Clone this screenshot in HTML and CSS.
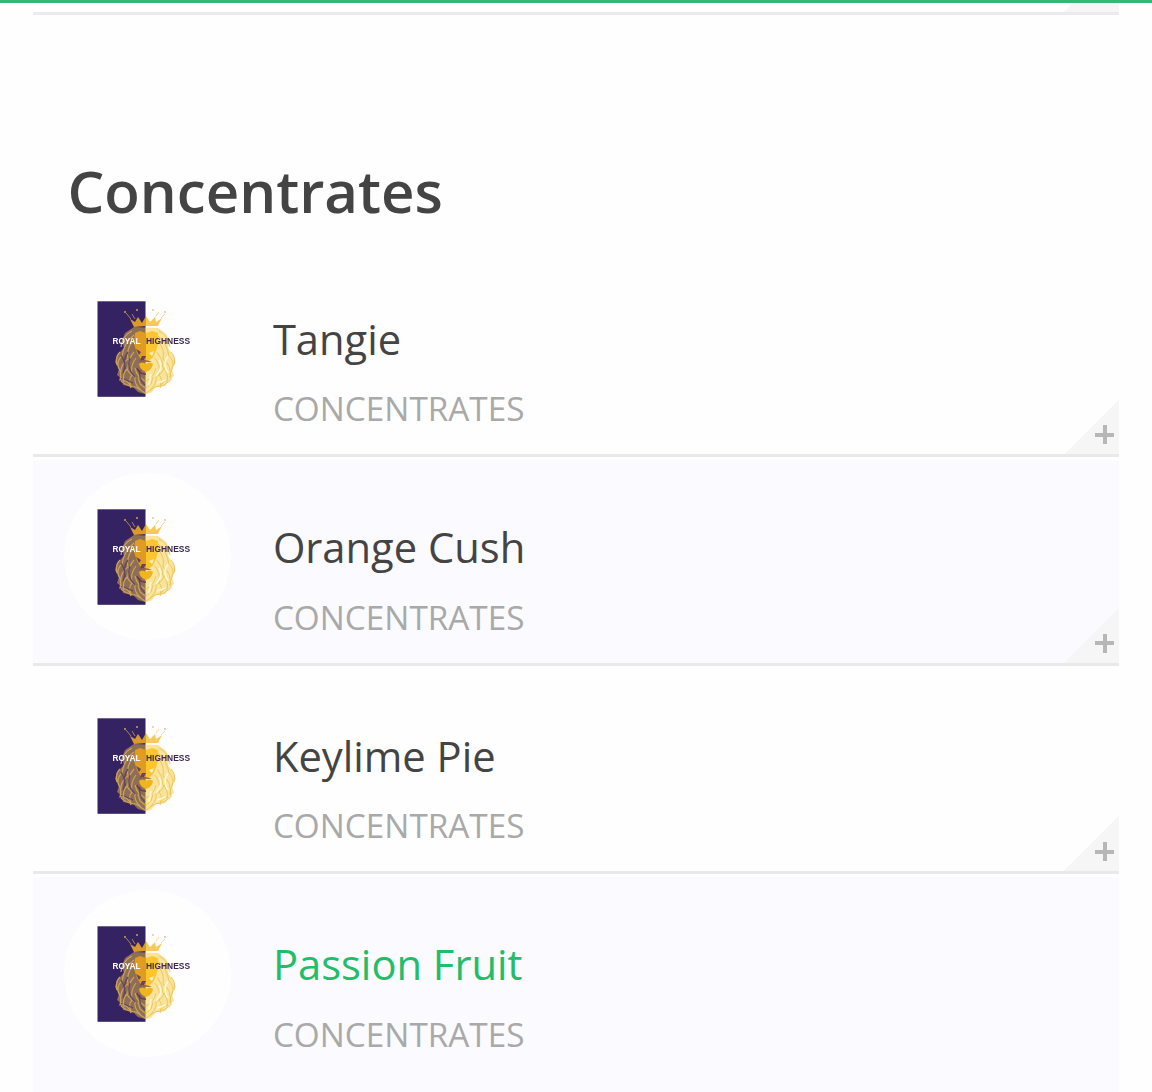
FILE: index.html
```html
<!DOCTYPE html>
<html lang="en">
<head>
    <meta charset="UTF-8">
    <meta name="viewport" content="width=device-width, initial-scale=1.0">
    <title>Concentrates</title>
    <link rel="stylesheet" href="styles.css">
</head>
<body>
    <div class="top-bar"></div>

    <main class="menu">
        <div class="previous-item">
            <div class="corner"></div>
        </div>

        <h2 class="menu-title">Concentrates</h2>

        <ul class="menu-list">
            <li class="menu-item">
                <div class="thumb">
                    <!-- Brand logo, reused by the other rows -->
                    <svg viewBox="0 0 168 168">
                        <defs>
                            <filter id="soft"><feGaussianBlur stdDeviation="0.7"/></filter>
                            <clipPath id="left-half"><rect x="33" y="36" width="48.5" height="96"/></clipPath>
                            <clipPath id="right-half"><rect x="81.5" y="36" width="50" height="96"/></clipPath>
                            <path id="mane" d="M68 66Q58 71 57 82M70 70Q60 78 58 91Q52 96 55 104M69 76Q62 84 64 94Q55 100 57 113M70 87Q64 94 64 103Q58 108 60 117M72 93Q66 101 68 110Q64 114 67 121M56 87Q51 92 53 100M54 101Q58 108 56 115Q64 114 67 123M61 101Q65 109 71 112Q70 119 77 125M71 103Q73 112 81 116M57 116Q64 122 72 122L81 128M74 112L76 119L81 123M95 66Q105 71 106 82M93 70Q103 78 105 91Q111 96 108 104M94 76Q101 84 99 94Q108 100 106 113M93 87Q99 94 99 103Q105 108 103 117M91 93Q97 101 95 110Q99 114 96 121M107 87Q112 92 110 100M109 101Q105 108 107 115Q99 114 96 123M102 101Q98 109 92 112Q93 119 86 125M92 103Q90 112 82 116M106 116Q99 122 91 122L82 128M89 112L87 119L82 123"/>
                            <path id="mane-shape" d="M70 62L61 68L58 76L60 83L53 90L51 97L55 104L53 110L58 114L59 120L69 122L74 127L81 129L87 128L92 122L102 121L104 115L110 111L108 104L112 97L109 90L104 83L106 75L101 68L94 63Z"/>
                        </defs>
                        <g id="logo">
                            <g filter="url(#soft)">
                                <rect x="33.5" y="36.3" width="48" height="95.5" fill="#362363"/>
                                <use href="#mane-shape" fill="#9d7b54" opacity=".85" clip-path="url(#left-half)"/>
                                <use href="#mane-shape" fill="#f9dd85" opacity=".8" clip-path="url(#right-half)"/>
                                <use href="#mane" fill="none" stroke="#cba25a" stroke-width="1.2" clip-path="url(#left-half)"/>
                                <use href="#mane" fill="none" stroke="#ecc75f" stroke-width="1" clip-path="url(#right-half)"/>
                                <path d="M57 90Q63 99 59 108M66 93Q62 103 71 112M60 114L69 118M76 105Q74 114 81 120M64 87Q58 95 62 104" fill="none" stroke="#64475a" stroke-width="1.3"/>
                                <path d="M104 91Q98 99 104 108M95 95Q100 102 92 111M102 115L93 118M87 109L85 120" fill="none" stroke="#fff6d2" stroke-width="1.7"/>
                                <!-- crown -->
                                <path d="M66 54L71 57L74 52L78 58L82 51V61L70 62Z" fill="#d99a2a"/>
                                <path d="M82 51L86 57L91 52L92 57L98 53L94 61L82 61Z" fill="#f6ca55"/>
                                <path d="M62 48L67 54M68 49L71 54" stroke="#a88258" stroke-width="1"/>
                                <path d="M92 51L95 47M97 53L101 49" stroke="#f3d68c" stroke-width="1"/>
                                <g fill="#c9a25b">
                                    <circle cx="61" cy="47" r="1"/>
                                    <circle cx="73" cy="45" r="1"/>
                                    <circle cx="89" cy="45" r=".8"/>
                                    <circle cx="101" cy="47" r=".8"/>
                                </g>
                                <!-- face -->
                                <path d="M71 68L76 66L82 68L82 98L77 95L73 88L70 79Z" fill="#df9b20"/>
                                <path d="M82 68L88 66L94 68L94 79L92 86L89 92L85 96L82 97Z" fill="#fec62e"/>
                                <path d="M72 84L77 87L75 90ZM78 91L82 91L80 95L76 95ZM74 96Q82 94 88 97" fill="#69435a"/>
                                <path d="M85 88L90 86L88 91Z" fill="#fff0c6"/>
                                <path d="M75 99Q78 96 82 99Q86 96 89 99Q88 105 82 107Q76 105 75 99Z" fill="#f0b41c"/>
                                <path d="M73 103Q76 110 82 109" fill="none" stroke="#5d3a4b" stroke-width="1.3"/>
                            </g>
                            <g class="logo-text">
                                <text x="48.5" y="78.7" fill="#fff" textLength="28" lengthAdjust="spacingAndGlyphs">ROYAL</text>
                                <text x="82" y="78.7" fill="#3c2854" textLength="44" lengthAdjust="spacingAndGlyphs">HIGHNESS</text>
                            </g>
                        </g>
                    </svg>
                </div>
                <div class="details">
                    <div class="name">Tangie</div>
                    <div class="category">CONCENTRATES</div>
                </div>
                <div class="corner"><span class="plus"></span></div>
            </li>
            <li class="menu-item">
                <div class="thumb"><svg viewBox="0 0 168 168"><use href="#logo"/></svg></div>
                <div class="details">
                    <div class="name">Orange Cush</div>
                    <div class="category">CONCENTRATES</div>
                </div>
                <div class="corner"><span class="plus"></span></div>
            </li>
            <li class="menu-item">
                <div class="thumb"><svg viewBox="0 0 168 168"><use href="#logo"/></svg></div>
                <div class="details">
                    <div class="name">Keylime Pie</div>
                    <div class="category">CONCENTRATES</div>
                </div>
                <div class="corner"><span class="plus"></span></div>
            </li>
            <li class="menu-item open">
                <div class="thumb"><svg viewBox="0 0 168 168"><use href="#logo"/></svg></div>
                <div class="details">
                    <div class="name">Passion Fruit</div>
                    <div class="category">CONCENTRATES</div>
                </div>
            </li>
        </ul>
    </main>
</body>
</html>
```
FILE: styles.css
```css
* {
    box-sizing: border-box;
}

body {
    margin: 0;
    height: 1092px;
    overflow: hidden;
    background-color: #fefefe;
    color: #444;
    font-family: "Open Sans", sans-serif;
}

.top-bar {
    height: 3px;
    background-color: #32b877;
}

.menu {
    margin: 0 33px 0 33.4px;
}

.previous-item {
    position: relative;
    height: 12px;
    overflow: hidden;
    border-bottom: 3px solid #ebebed;
}

.menu-title {
    margin: 135px 0 18.5px;
    padding-left: 34px;
    font-size: 58.2px;
    font-weight: 600;
    line-height: 81px;
    height: 80px;
}

.menu-list {
    margin: 0;
    padding: 0;
    list-style: none;
}

.menu-item {
    position: relative;
    display: flex;
    align-items: flex-start;
    height: 208.5px;
    padding: 16px 30.5px 0;
    border-bottom: 3px solid #e9e9eb;
}

.menu-item:nth-child(even) {
    background: linear-gradient(#fefefe 3px, #fafaff 3px);
}

/* expanded row, runs past the bottom of the screen */
.menu-item.open {
    height: 218px;
    border-bottom: none;
}

.thumb {
    flex: none;
    width: 167px;
    height: 167px;
    margin-right: 42px;
    border-radius: 50%;
    background-color: #fefefe;
}

.thumb svg {
    display: block;
    width: 168px;
    height: 168px;
}

.logo-text {
    font-family: "Liberation Sans", Arial, sans-serif;
    font-size: 9.5px;
    font-weight: bold;
    filter: blur(0.35px);
}

.details {
    padding-top: 46px;
}

.name {
    font-size: 41.7px;
    line-height: 56px;
}

.open .name {
    color: #22bd69;
}

.category {
    margin-top: 18.5px;
    color: #a9a9a9;
    font-size: 33.3px;
    line-height: 46px;
}

.corner {
    position: absolute;
    right: 0;
    bottom: 0;
    width: 55px;
    height: 55px;
    background: linear-gradient(135deg, transparent 50%, #f6f6f6 50%);
}

.plus {
    position: absolute;
    right: 5px;
    bottom: 10px;
    width: 19px;
    height: 19px;
    background:
        linear-gradient(#b7b7b7, #b7b7b7) 0 7.5px / 19px 4px no-repeat,
        linear-gradient(#b7b7b7, #b7b7b7) 7.5px 0 / 4px 19px no-repeat;
}
```
